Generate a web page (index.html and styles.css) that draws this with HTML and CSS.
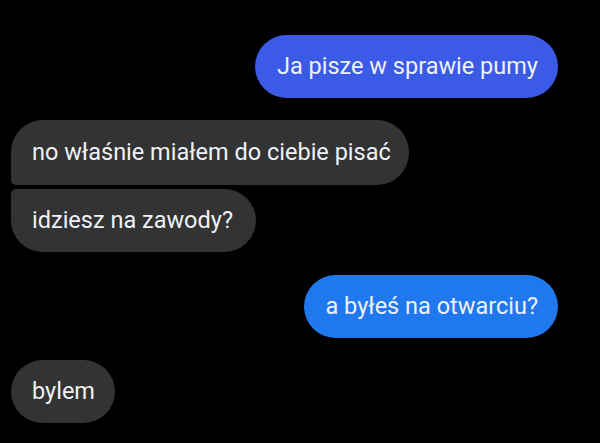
FILE: index.html
```html
<!DOCTYPE html>
<html lang="pl">
<head>
<meta charset="utf-8">
<link rel="stylesheet" href="styles.css">
</head>
<body>
<div class="chat">
  <div class="msg out purple">Ja pisze w sprawie pumy</div>
  <div class="group">
    <div class="msg in first">no właśnie miałem do ciebie pisać</div>
    <div class="msg in last">idziesz na zawody?</div>
  </div>
  <div class="msg out blue">a byłeś na otwarciu?</div>
  <div class="msg in">bylem</div>
</div>
</body>
</html>
```
FILE: styles.css
```css
html, body {
  margin: 0;
  background: #000;
}
.chat {
  width: 600px;
  height: 443px;
  box-sizing: border-box;
  padding: 35px 42px 0 11px;
  display: flex;
  flex-direction: column;
  gap: 22px;
  font-family: Roboto, "Noto Sans", sans-serif;
}
.group {
  display: flex;
  flex-direction: column;
  gap: 4px;
  align-items: flex-start;
}
.msg {
  height: 63px;
  box-sizing: border-box;
  padding: 0 20px 2px 21px;
  display: flex;
  align-items: center;
  border-radius: 32px;
  font-size: 23.5px;
  color: #eef2f8;
  white-space: nowrap;
}
.in {
  align-self: flex-start;
  background: #333333;
}
.out {
  align-self: flex-end;
}
.purple { background: #3b5ae6; padding-left: 22px; }
.blue { background: #1f78ee; margin-top: 1px; }
.group .in { height: 65px; }
.group .last { height: 63px; padding-right: 23px; }
.first { border-bottom-left-radius: 5px; padding-right: 18px; }
.last { border-top-left-radius: 5px; }
```
